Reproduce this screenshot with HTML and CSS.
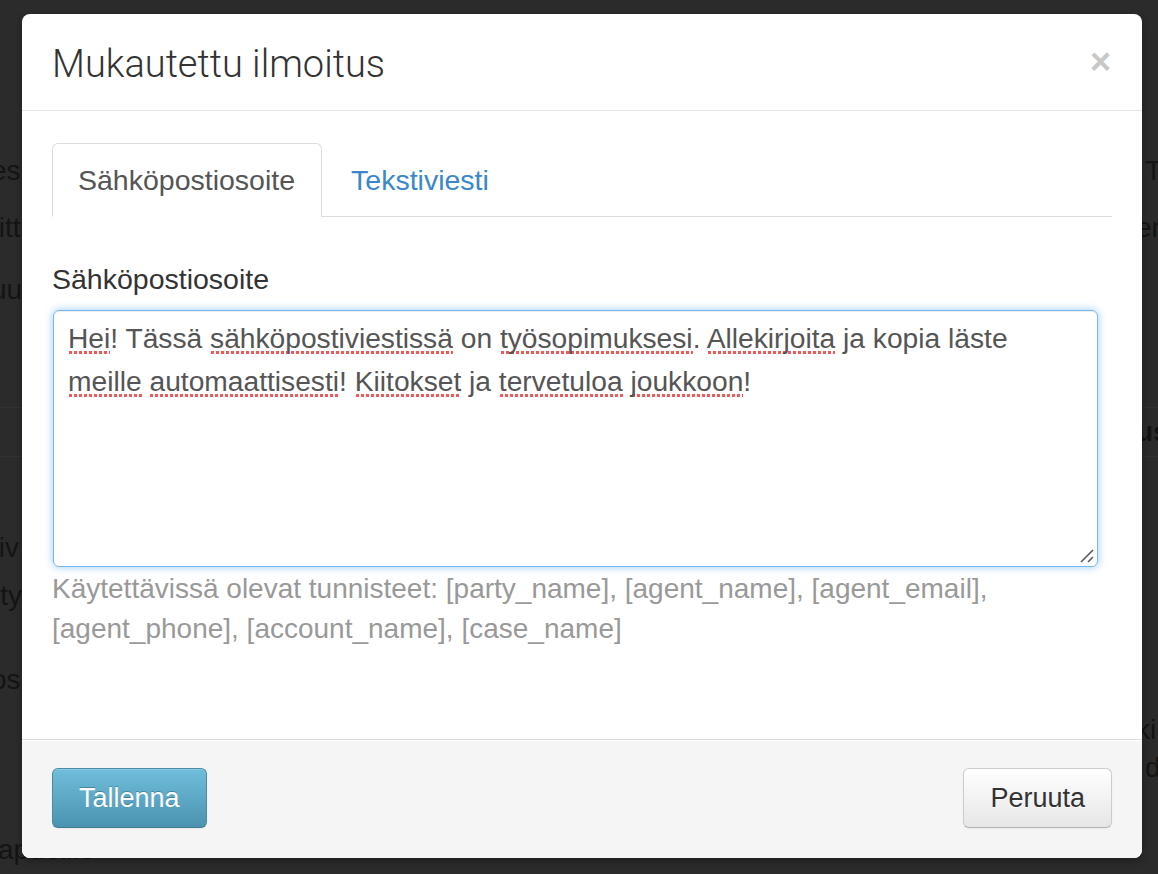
FILE: index.html
```html
<!DOCTYPE html>
<html lang="fi">
<head>
  <meta charset="UTF-8" />
  <title>Mukautettu ilmoitus</title>
  <link rel="stylesheet" href="styles.css">
</head>
<body>
  <!-- dimmed page behind the modal -->
  <div class="backdrop">
    <div class="bg-row row-1"><span class="bg-left">es</span><span class="bg-right">T</span></div>
    <div class="bg-row row-2"><span class="bg-left">titt</span><span class="bg-right cut">er</span></div>
    <div class="bg-row row-3"><span class="bg-left">uu</span></div>
    <div class="bg-row row-4 ruled"><span class="bg-right cut strong">us</span></div>
    <div class="bg-row row-5"><span class="bg-left">tiv</span></div>
    <div class="bg-row row-6"><span class="bg-left">rty</span></div>
    <div class="bg-row row-7"><span class="bg-left">os</span></div>
    <div class="bg-row row-8"><span class="bg-right cut">ki</span></div>
    <div class="bg-row row-9"><span class="bg-right">d</span></div>
    <div class="bg-row row-10"><span class="bg-left wide">apuoilio</span></div>
  </div>

  <div class="modal">
    <div class="modal-header">
      <h3>Mukautettu ilmoitus</h3>
      <button class="close" type="button">&times;</button>
    </div>

    <div class="modal-body">
      <ul class="nav-tabs">
        <li class="active"><a>Sähköpostiosoite</a></li>
        <li><a>Tekstiviesti</a></li>
      </ul>

      <div class="tab-pane">
        <label class="field-label">Sähköpostiosoite</label>
        <div class="textarea" role="textbox">
          <span class="typo">Hei</span>! Tässä <span class="typo">sähköpostiviestissä</span> on <span class="typo">työsopimuksesi</span>. <span class="typo">Allekirjoita</span> ja kopia läste <span class="typo">meille</span> <span class="typo">automaattisesti</span>! <span class="typo">Kiitokset</span> ja <span class="typo">tervetuloa</span> <span class="typo">joukkoon</span>!
          <svg class="grip" viewBox="0 0 14 14" width="14" height="14">
            <path d="M1 13L13 1M8 13L13 8" stroke="#5a5a5a" stroke-width="1.6" fill="none"/>
          </svg>
        </div>
        <p class="help">Käytettävissä olevat tunnisteet: [party_name], [agent_name], [agent_email], [agent_phone], [account_name], [case_name]</p>
      </div>
    </div>

    <div class="modal-footer">
      <button class="btn btn-info" type="button">Tallenna</button>
      <button class="btn" type="button">Peruuta</button>
    </div>
  </div>
</body>
</html>
```

FILE: styles.css
```css
* {
  box-sizing: border-box;
  margin: 0;
  padding: 0;
}

body {
  width: 1158px;
  height: 874px;
  overflow: hidden;
  position: relative;
  background: #2b2b2b;
  font-family: 'Liberation Sans', Arial, sans-serif;
  font-size: 28px;
  line-height: 40px;
  color: #333;
}

/* backdrop page */
.backdrop {
  height: 874px;
  overflow: hidden;
  color: #141414;
}

.bg-row {
  display: flex;
  justify-content: space-between;
  height: 40px;
  white-space: nowrap;
}

.bg-row.ruled {
  border-top: 1px solid #323232;
  border-bottom: 1px solid #323232;
  height: 50px;
  align-items: center;
}

.bg-left {
  margin-left: -9px;
}

.bg-left.wide {
  margin-left: -2px;
}

.bg-right {
  margin-left: auto;
  margin-right: 1px;
  width: 12px;
}

.bg-right.cut {
  margin-right: 6px;
  width: 16px;
}

.strong {
  font-weight: 700;
}

.row-1 { margin-top: 151px; }
.row-2 { margin-top: 17px; }
.row-3 { margin-top: 22px; }
.row-4 { margin-top: 97px; }
.row-5 { margin-top: 71px; }
.row-6 { margin-top: 8px; }
.row-7 { margin-top: 44px; }
.row-8 { margin-top: 10px; }
.row-9 { margin-top: -2px; }
.row-10 { margin-top: 42px; }

/* modal */
.modal {
  position: absolute;
  left: 22px;
  top: 14px;
  width: 1120px;
  height: 844px;
  background: #fff;
  border-radius: 8px;
  box-shadow: 0 3px 7px rgba(0, 0, 0, 0.3);
  display: flex;
  flex-direction: column;
  overflow: hidden;
}

.modal-header {
  height: 97px;
  padding: 0 30px;
  border-bottom: 1px solid #e5e5e5;
  display: flex;
  align-items: center;
  justify-content: space-between;
}

.modal-header h3 {
  font-family: Roboto, 'Liberation Sans', sans-serif;
  font-weight: 300;
  font-size: 38px;
  line-height: 48px;
  color: #333;
  padding-top: 4px;
}

.close {
  border: none;
  background: none;
  font-family: 'Liberation Sans', Arial, sans-serif;
  font-size: 36px;
  font-weight: 700;
  line-height: 36px;
  color: #c8c8c8;
  margin-right: 1px;
}

.modal-body {
  flex: 1;
  padding: 32px 30px 0;
}

.nav-tabs {
  list-style: none;
  display: flex;
  border-bottom: 1px solid #ddd;
  font-size: 28.5px;
}

.nav-tabs li {
  margin-bottom: -1px;
  margin-right: 3px;
}

.nav-tabs a {
  display: block;
  padding: 16px 26px 16px 25px;
  border: 1px solid transparent;
  border-radius: 6px 6px 0 0;
  color: #3a87c9;
  line-height: 40px;
}

.nav-tabs .active a {
  color: #555;
  background: #fff;
  border-color: #ddd #ddd transparent;
}

.field-label {
  display: block;
  margin-top: 42px;
  margin-bottom: 11px;
  font-size: 28.5px;
  color: #333;
}

.textarea {
  position: relative;
  width: 1045px;
  height: 257px;
  margin-left: 1px;
  padding: 6px 40px 6px 14px;
  border: 1px solid rgba(82, 168, 236, 0.8);
  border-radius: 6px;
  box-shadow: inset 0 1px 1px rgba(0, 0, 0, 0.075), 0 0 8px rgba(82, 168, 236, 0.6);
  font-size: 28.2px;
  color: #555;
  line-height: 43px;
}

.typo {
  padding-bottom: 1px;
  background-image: radial-gradient(circle, rgba(240, 80, 80, 0.95) 1.5px, transparent 2px);
  background-size: 5px 5px;
  background-repeat: repeat-x;
  background-position: 0 100%;
}

.grip {
  position: absolute;
  right: 3px;
  bottom: 3px;
}

.help {
  margin-top: 2px;
  color: #999;
  line-height: 40px;
}

.modal-footer {
  height: 119px;
  padding: 28px 30px 0;
  border-top: 1px solid #ddd;
  background: #f5f5f5;
  box-shadow: inset 0 1px 0 #fff;
  display: flex;
  justify-content: space-between;
  align-items: flex-start;
}

.btn {
  height: 60px;
  padding: 0 26px;
  font-family: 'Liberation Sans', Arial, sans-serif;
  font-size: 27px;
  color: #333;
  text-shadow: 0 1px 1px rgba(255, 255, 255, 0.75);
  background: linear-gradient(#ffffff, #e6e6e6);
  border: 1px solid #ccc;
  border-bottom-color: #b3b3b3;
  border-radius: 6px;
  box-shadow: inset 0 1px 0 rgba(255, 255, 255, 0.2), 0 1px 2px rgba(0, 0, 0, 0.05);
}

.btn-info {
  color: #fff;
  text-shadow: 0 -1px 0 rgba(0, 0, 0, 0.25);
  background: linear-gradient(#6fbedb, #4b93b1);
  border-color: #4a8ca8 #4a8ca8 #3f7a93;
}
```
